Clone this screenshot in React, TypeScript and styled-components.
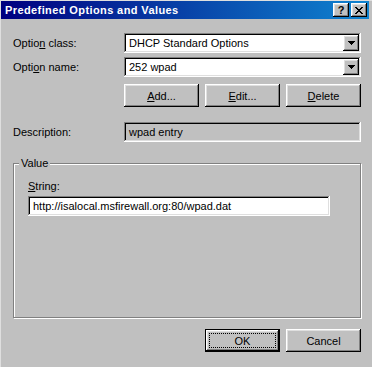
import React from 'react';
import styled, { createGlobalStyle, css } from 'styled-components';

const GlobalStyle = createGlobalStyle`
  html, body { margin: 0; padding: 0; background: #c0c0c0; }
  body {
    font-family: "Liberation Sans", Arial, sans-serif;
    font-size: 11px;
    color: #000;
  }
`;

const raised = css`
  box-shadow: inset -1px -1px #000, inset 1px 1px #fff, inset -2px -2px #808080,
    inset 2px 2px #dfdfdf;
`;

const sunken = css`
  box-shadow: inset -1px -1px #fff, inset 1px 1px #808080, inset -2px -2px #dfdfdf,
    inset 2px 2px #000;
`;

const Window = styled.div`
  width: 372px;
  height: 367px;
  box-sizing: border-box;
  border-top: 1px solid #dfdfdf;
  border-left: 1px solid #dfdfdf;
  padding-right: 3px;
  display: flex;
  flex-direction: column;
  background: #c0c0c0;
`;

const TitleBar = styled.div`
  height: 18px;
  flex: none;
  display: flex;
  align-items: center;
  padding: 0 2px 0 4px;
  background: linear-gradient(to right, #000080, #1084d0);
  color: #fff;
  font-weight: bold;
  font-size: 11px;
`;

const TitleText = styled.span`
  flex: 1;
  white-space: nowrap;
  letter-spacing: 0.4px;
`;

const CaptionButtons = styled.div`
  display: flex;
  gap: 2px;
`;

const CaptionButton = styled.div`
  width: 16px;
  height: 14px;
  box-sizing: border-box;
  background: #c0c0c0;
  ${raised};
  display: flex;
  align-items: center;
  justify-content: center;
  color: #000;
  font-weight: bold;
  font-size: 11px;
  line-height: 1;
`;

const Body = styled.div`
  flex: 1;
  display: flex;
  flex-direction: column;
  padding: 14px 8px 0 12px;
`;

const Row = styled.div<{ $top?: number }>`
  display: grid;
  grid-template-columns: 111px 1fr;
  align-items: center;
  margin-top: ${(p) => p.$top ?? 0}px;
`;

const Label = styled.span`
  white-space: nowrap;
  line-height: 13px;
`;

const U = styled.span`
  text-decoration: underline;
  text-underline-offset: 1px;
`;

const Combo = styled.div`
  height: 20px;
  box-sizing: border-box;
  background: #fff;
  ${sunken};
  display: flex;
  align-items: center;
  padding: 2px;
`;

const FieldText = styled.span`
  flex: 1;
  padding-left: 3px;
  white-space: nowrap;
`;

const DropButton = styled.div`
  width: 16px;
  height: 16px;
  box-sizing: border-box;
  background: #c0c0c0;
  ${raised};
  display: flex;
  align-items: center;
  justify-content: center;
`;

const ButtonRow = styled.div`
  display: grid;
  grid-template-columns: repeat(3, 75px);
  column-gap: 6px;
`;

const Button = styled.div<{ $default?: boolean }>`
  height: 23px;
  box-sizing: border-box;
  background: #c0c0c0;
  display: flex;
  align-items: center;
  justify-content: center;
  ${(p) =>
    p.$default
      ? css`
          box-shadow: inset -2px -2px #000, inset 1px 1px #000, inset 2px 2px #fff,
            inset -3px -3px #808080, inset 3px 3px #dfdfdf;
          outline: 1px dotted #000;
          outline-offset: -5px;
        `
      : raised};
`;

const ReadOnlyField = styled.div`
  height: 20px;
  box-sizing: border-box;
  background: #c0c0c0;
  ${sunken};
  display: flex;
  align-items: center;
  padding: 2px;
`;

const Group = styled.fieldset`
  margin: 15px 0 0 0;
  padding: 0;
  height: 161px;
  box-sizing: border-box;
  min-width: 0;
  border: 1px solid #808080;
  box-shadow: inset 1px 1px #fff, 1px 1px #fff;
`;

const Legend = styled.legend`
  margin-left: 5px;
  padding: 0 2px;
  background: #c0c0c0;
  line-height: 13px;
`;

const GroupContent = styled.div`
  display: flex;
  flex-direction: column;
  padding: 10px 0 0 14px;
`;

const TextInput = styled.div`
  width: 302px;
  height: 20px;
  margin-top: 3px;
  box-sizing: border-box;
  background: #fff;
  ${sunken};
  display: flex;
  align-items: center;
  padding: 2px;
`;

const Footer = styled.div`
  display: flex;
  justify-content: flex-end;
  gap: 6px;
  margin-top: 11px;
`;

const FooterButton = styled(Button)`
  width: 75px;
`;

const Arrow = () => (
  <svg width="7" height="4" viewBox="0 0 7 4" shapeRendering="crispEdges">
    <path d="M0 0h7v1H0zM1 1h5v1H1zM2 2h3v1H2zM3 3h1v1H3z" fill="#000" />
  </svg>
);

const CloseGlyph = () => (
  <svg width="8" height="7" viewBox="0 0 8 7" shapeRendering="crispEdges">
    <path
      d="M0 0h2v1H0zM6 0h2v1H6zM1 1h2v1H1zM5 1h2v1H5zM2 2h4v1H2zM3 3h2v1H3zM2 4h4v1H2zM1 5h2v1H1zM5 5h2v1H5zM0 6h2v1H0zM6 6h2v1H6z"
      fill="#000"
    />
  </svg>
);

export default function App() {
  return (
    <>
      <GlobalStyle />
      <Window>
        <TitleBar>
          <TitleText>Predefined Options and Values</TitleText>
          <CaptionButtons>
            <CaptionButton>?</CaptionButton>
            <CaptionButton>
              <CloseGlyph />
            </CaptionButton>
          </CaptionButtons>
        </TitleBar>
        <Body>
          <Row>
            <Label>
              Optio<U>n</U> class:
            </Label>
            <Combo>
              <FieldText>DHCP Standard Options</FieldText>
              <DropButton>
                <Arrow />
              </DropButton>
            </Combo>
          </Row>
          <Row $top={4}>
            <Label>
              Opti<U>o</U>n name:
            </Label>
            <Combo>
              <FieldText>252 wpad</FieldText>
              <DropButton>
                <Arrow />
              </DropButton>
            </Combo>
          </Row>
          <Row $top={7}>
            <span />
            <ButtonRow>
              <Button>
                <span>
                  <U>A</U>dd...
                </span>
              </Button>
              <Button>
                <span>
                  <U>E</U>dit...
                </span>
              </Button>
              <Button>
                <span>
                  <U>D</U>elete
                </span>
              </Button>
            </ButtonRow>
          </Row>
          <Row $top={15}>
            <Label>Description:</Label>
            <ReadOnlyField>
              <FieldText>wpad entry</FieldText>
            </ReadOnlyField>
          </Row>
          <Group>
            <Legend>Value</Legend>
            <GroupContent>
              <Label>
                <U>S</U>tring:
              </Label>
              <TextInput>
                <FieldText>http://isalocal.msfirewall.org:80/wpad.dat</FieldText>
              </TextInput>
            </GroupContent>
          </Group>
          <Footer>
            <FooterButton $default>OK</FooterButton>
            <FooterButton>Cancel</FooterButton>
          </Footer>
        </Body>
      </Window>
    </>
  );
}
